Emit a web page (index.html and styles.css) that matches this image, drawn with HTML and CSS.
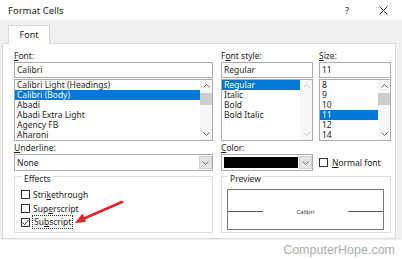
FILE: index.html
```html
<!DOCTYPE html>
<html lang="en">
<head>
    <meta charset="UTF-8">
    <title>Format Cells</title>
    <link rel="stylesheet" href="styles.css">
</head>
<body>
    <div class="dialog">
        <div class="titlebar">
            <span class="title">Format Cells</span>
            <span class="help">?</span>
            <svg class="close" width="9" height="9" viewBox="0 0 9 9"><path d="M0.5 0.5L8.5 8.5M8.5 0.5L0.5 8.5" stroke="#333" stroke-width="1"/></svg>
        </div>

        <div class="frame">
            <div class="tabs">
                <div class="tab">Font</div>
            </div>

            <div class="panel">
                <!-- font / style / size lists -->
                <div class="row">
                    <div class="col col-font">
                        <div class="label"><u>F</u>ont:</div>
                        <div class="input">Calibri</div>
                        <div class="list">
                            <ul class="items">
                                <li>Calibri Light (Headings)</li>
                                <li class="sel">Calibri (Body)</li>
                                <li>Abadi</li>
                                <li>Abadi Extra Light</li>
                                <li>Agency FB</li>
                                <li>Aharoni</li>
                            </ul>
                            <div class="scroll">
                                <div class="arrow"><svg width="7" height="4" viewBox="0 0 7 4"><path d="M0.5 3.5L3.5 0.5L6.5 3.5" fill="none" stroke="#606060"/></svg></div>
                                <div class="thumb"></div>
                                <div class="track"></div>
                                <div class="arrow"><svg width="7" height="4" viewBox="0 0 7 4"><path d="M0.5 0.5L3.5 3.5L6.5 0.5" fill="none" stroke="#606060"/></svg></div>
                            </div>
                        </div>
                    </div>

                    <div class="col col-style">
                        <div class="label">F<u>o</u>nt style:</div>
                        <div class="input">Regular</div>
                        <div class="list">
                            <ul class="items">
                                <li class="sel">Regular</li>
                                <li>Italic</li>
                                <li>Bold</li>
                                <li>Bold Italic</li>
                            </ul>
                            <div class="scroll">
                                <div class="arrow"><svg width="7" height="4" viewBox="0 0 7 4"><path d="M0.5 3.5L3.5 0.5L6.5 3.5" fill="none" stroke="#c8c8c8"/></svg></div>
                                <div class="track"></div>
                                <div class="arrow"><svg width="7" height="4" viewBox="0 0 7 4"><path d="M0.5 0.5L3.5 3.5L6.5 0.5" fill="none" stroke="#c8c8c8"/></svg></div>
                            </div>
                        </div>
                    </div>

                    <div class="col col-size">
                        <div class="label"><u>S</u>ize:</div>
                        <div class="input">11</div>
                        <div class="list">
                            <ul class="items">
                                <li>8</li>
                                <li>9</li>
                                <li>10</li>
                                <li class="sel">11</li>
                                <li>12</li>
                                <li>14</li>
                            </ul>
                            <div class="scroll">
                                <div class="arrow"><svg width="7" height="4" viewBox="0 0 7 4"><path d="M0.5 3.5L3.5 0.5L6.5 3.5" fill="none" stroke="#606060"/></svg></div>
                                <div class="thumb"></div>
                                <div class="track"></div>
                                <div class="arrow"><svg width="7" height="4" viewBox="0 0 7 4"><path d="M0.5 0.5L3.5 3.5L6.5 0.5" fill="none" stroke="#606060"/></svg></div>
                            </div>
                        </div>
                    </div>
                </div>

                <!-- underline / color -->
                <div class="row">
                    <div class="col col-font">
                        <div class="label label-sm"><u>U</u>nderline:</div>
                        <div class="combo">
                            <span class="combo-text">None</span>
                            <span class="combo-btn"><svg width="7" height="4" viewBox="0 0 7 4"><path d="M0.5 0.5L3.5 3.5L6.5 0.5" fill="none" stroke="#707070"/></svg></span>
                        </div>
                    </div>
                    <div class="col col-style">
                        <div class="label label-sm"><u>C</u>olor:</div>
                        <div class="combo">
                            <span class="swatch"></span>
                            <span class="combo-btn"><svg width="7" height="4" viewBox="0 0 7 4"><path d="M0.5 0.5L3.5 3.5L6.5 0.5" fill="none" stroke="#707070"/></svg></span>
                        </div>
                    </div>
                    <div class="col col-size normal">
                        <span class="check"></span>
                        <span><u>N</u>ormal font</span>
                    </div>
                </div>

                <!-- effects / preview -->
                <div class="row groups">
                    <fieldset class="group effects">
                        <legend>Effects</legend>
                        <div class="option"><span class="check"></span><span>Stri<u>k</u>ethrough</span></div>
                        <div class="option"><span class="check"></span><span>Sup<u>e</u>rscript</span></div>
                        <div class="option"><span class="check checked"><svg width="7" height="7" viewBox="0 0 7 7"><path d="M0.5 3.5L2.6 5.6L6.5 1" fill="none" stroke="#333" stroke-width="1"/></svg></span><span class="focus">Su<u>b</u>script</span></div>
                    </fieldset>
                    <fieldset class="group preview">
                        <legend>Preview</legend>
                        <div class="sample">
                            <span class="rule"></span>
                            <span class="sample-text">Calibri</span>
                            <span class="rule"></span>
                        </div>
                    </fieldset>
                </div>
            </div>
        </div>

        <div class="footer">ComputerHope.com</div>

        <svg class="pointer" width="56" height="28" viewBox="0 0 56 28">
            <path d="M51 3L12 20" stroke="#e3222a" stroke-width="2.6" stroke-linecap="round"/>
            <path d="M4 24L11.5 14.5L15 23Z" fill="#e3222a"/>
        </svg>
    </div>
</body>
</html>
```

FILE: styles.css
```css
* {
    box-sizing: border-box;
}
body {
    margin: 0;
    width: 402px;
    height: 259px;
    overflow: hidden;
    background: #fff;
    font-family: "Noto Sans", "Open Sans", sans-serif;
    font-size: 8.5px;
    color: #1e1e1e;
}
u {
    text-decoration-thickness: 1px;
    text-underline-offset: 1px;
}
.dialog {
    position: relative;
    height: 259px;
}
.titlebar {
    height: 20px;
    display: flex;
    align-items: center;
    padding-left: 8px;
}
.title {
    flex: 1;
    font-size: 9.5px;
}
.help {
    font-size: 9.5px;
    margin-right: 30px;
}
.close {
    margin-right: 14px;
}
.frame {
    background: #f0f0f0;
    padding-bottom: 1px;
}
.tabs {
    height: 23px;
    padding: 5px 0 0 8px;
}
.tab {
    position: relative;
    z-index: 1;
    width: 42px;
    height: 19px;
    background: #fff;
    border: 1px solid #d9d9d9;
    border-bottom: none;
    text-align: center;
    line-height: 18px;
    font-size: 9px;
}
.panel {
    margin-left: 2px;
    width: 394px;
    height: 196px;
    background: #fff;
    border: 1px solid #d9d9d9;
    padding: 5px 0 0 11px;
}
.row {
    display: flex;
}
.col-font {
    width: 199px;
}
.col-style {
    width: 92px;
    margin-left: 8px;
}
.col-size {
    width: 72px;
    margin-left: 6px;
}
.label {
    height: 13px;
    line-height: 13px;
}
.label-sm {
    height: 12px;
    line-height: 12px;
    margin-top: 1px;
}
.input {
    height: 16px;
    border: 1px solid #acacac;
    padding-left: 2px;
    line-height: 14px;
}
.list {
    display: flex;
    height: 62px;
    margin-top: 1px;
    border: 1px solid #acacac;
}
.items {
    flex: 1;
    list-style: none;
    margin: 0;
    padding: 0;
}
.items li {
    height: 10px;
    line-height: 10px;
    padding-left: 2px;
    white-space: nowrap;
}
.items li.sel {
    background: #0078d7;
    color: #fff;
}
.scroll {
    width: 12px;
    display: flex;
    flex-direction: column;
    background: #f7f7f7;
}
.arrow {
    height: 12px;
    display: flex;
    align-items: center;
    justify-content: center;
}
.thumb {
    height: 12px;
    margin-top: 1px;
    background: #cdcdcd;
}
.track {
    flex: 1;
}
.combo {
    display: flex;
    height: 17px;
    border: 1px solid #acacac;
    align-items: stretch;
}
.combo-text {
    flex: 1;
    padding-left: 2px;
    line-height: 15px;
}
.swatch {
    flex: 1;
    margin: 2px 1px 2px 2px;
    background: #000;
}
.combo-btn {
    width: 13px;
    margin: 1px 0 1px 0;
    background: #e5e5e5;
    border: 1px solid #d0d0d0;
    display: flex;
    align-items: center;
    justify-content: center;
}
.normal {
    display: flex;
    align-items: center;
    padding-top: 13px;
    gap: 4px;
}
.check {
    width: 9px;
    height: 9px;
    border: 1px solid #333;
    background: #fff;
    display: inline-flex;
    align-items: center;
    justify-content: center;
    flex: none;
}
.group {
    margin: 0;
    padding: 6px 0 3px 6px;
    border: 1px solid #dcdcdc;
}
.group legend {
    padding: 6px 2px 0 2px;
    margin-left: 1px;
    line-height: 4px;
    height: 10px;
}
.effects {
    width: 199px;
}
.preview {
    width: 170px;
    margin-left: 8px;
    padding: 8px 6px 2px 5px;
}
.option {
    display: flex;
    align-items: center;
    height: 14px;
    gap: 3px;
}
.focus {
    outline: 1px dotted #333;
    padding: 0 1px;
    line-height: 12px;
}
.sample {
    display: flex;
    align-items: center;
    height: 41px;
    border: 1px solid #7a7a7a;
    padding-top: 4px;
}
.rule {
    width: 35px;
    height: 1px;
    background: #555;
}
.sample-text {
    flex: 1;
    text-align: center;
    font-size: 6px;
    color: #333;
}
.footer {
    height: 19px;
    line-height: 20px;
    text-align: right;
    padding-right: 7px;
    font-family: "Liberation Sans", Arial, sans-serif;
    font-size: 12.5px;
    color: #adadad;
}
.pointer {
    position: absolute;
    left: 71px;
    top: 199px;
}
```
